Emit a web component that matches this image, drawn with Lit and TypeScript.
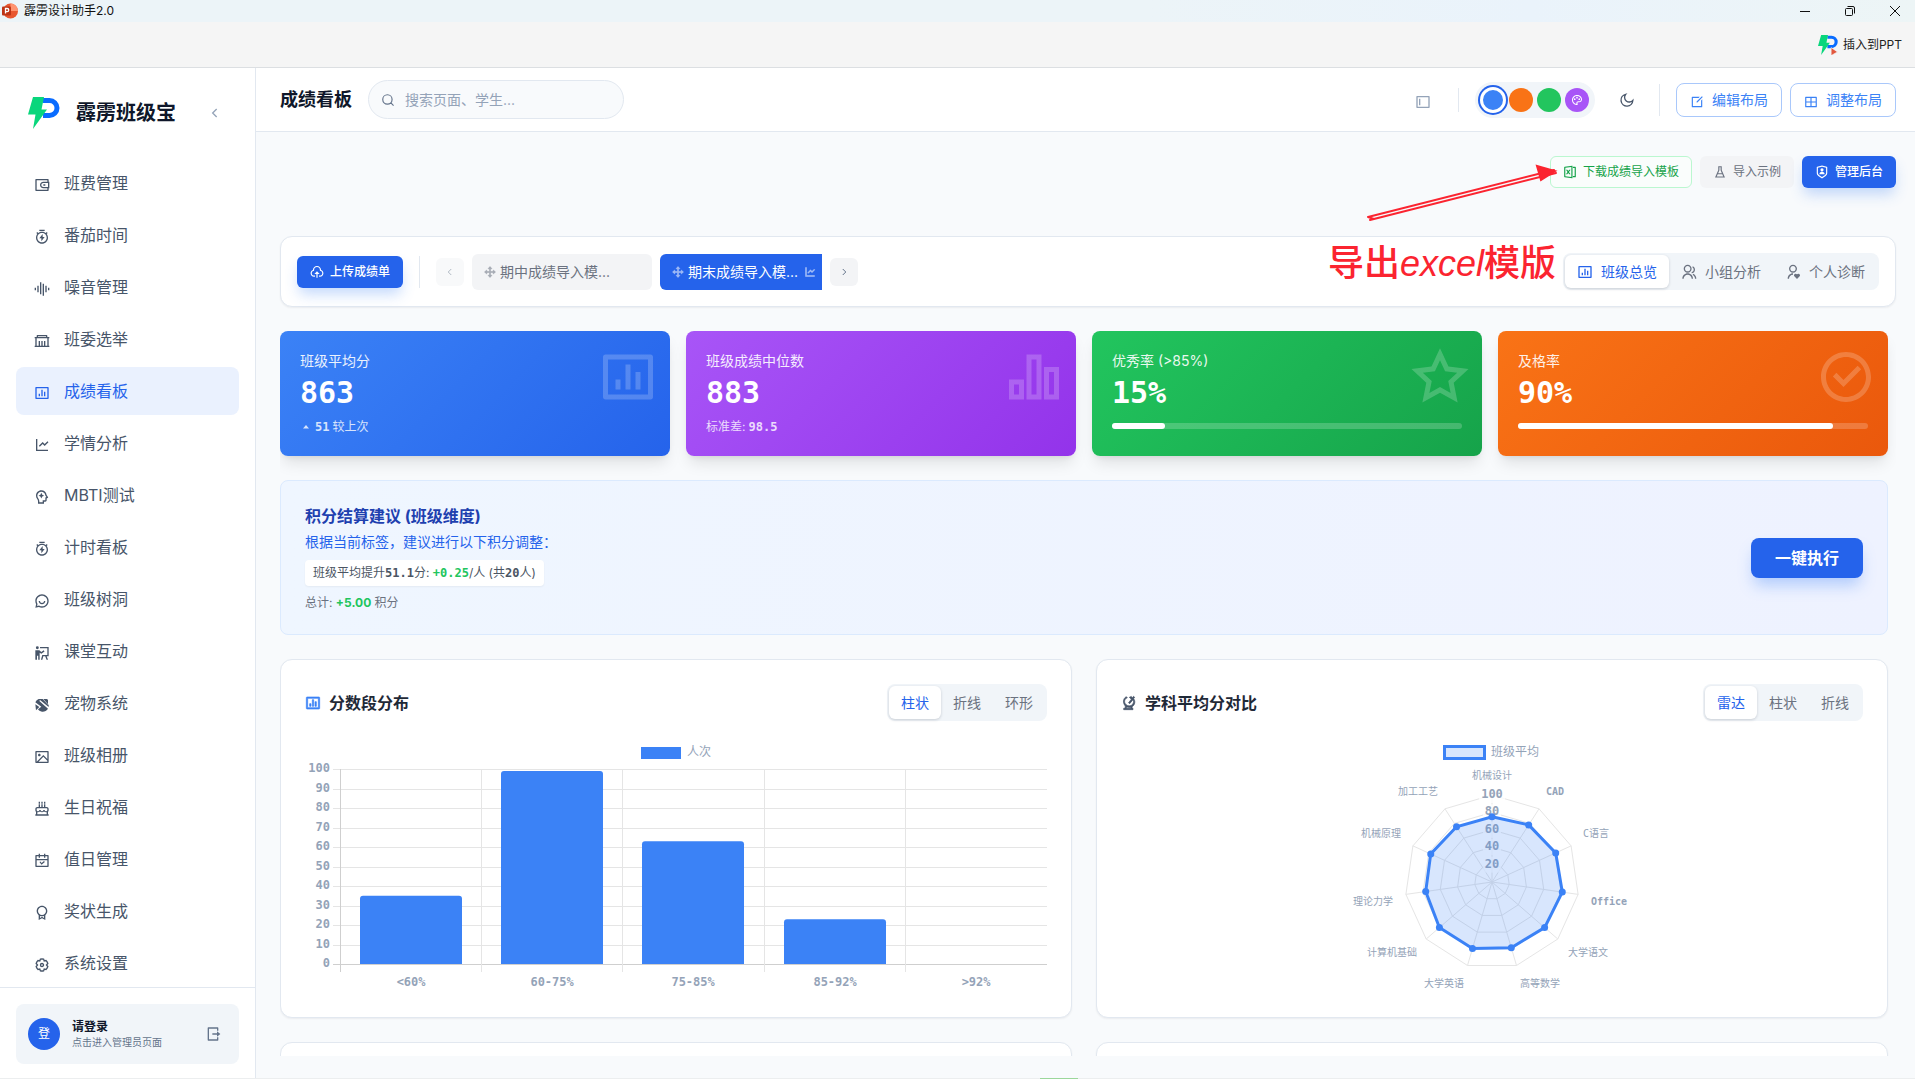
import { LitElement, html, svg, css, nothing } from "lit";
import { customElement, property } from "lit/decorators.js";
import { classMap } from "lit/directives/class-map.js";

/* Icon glyphs on a 24 x 24 grid. A leading "~" marks a stroked outline. */
const ICONS: Record<string, string> = {
  wallet:
    "M22 7H23V17H22V20C22 20.6 21.6 21 21 21H3C2.4 21 2 20.6 2 20V4C2 3.4 2.4 3 3 3H21C21.6 3 22 3.4 22 4V7ZM20 17H14C11.2 17 9 14.8 9 12C9 9.2 11.2 7 14 7H20V5H4V19H20V17ZM21 15V9H14C12.3 9 11 10.3 11 12C11 13.7 12.3 15 14 15H21ZM14 11H17V13H14V11Z",
  timer:
    "M6.38 5.97C7.92 4.74 9.87 4 12 4C14.1 4 16.1 4.74 17.6 5.97L19.07 4.51L20.49 5.93L19.03 7.38C20.26 8.92 21 10.87 21 13C21 17.97 16.97 22 12 22C7.03 22 3 17.97 3 13C3 10.87 3.74 8.92 4.97 7.38L3.51 5.93L4.93 4.51L6.38 5.97ZM12 20C15.87 20 19 16.87 19 13C19 9.13 15.87 6 12 6C8.13 6 5 9.13 5 13C5 16.87 8.13 20 12 20ZM13 12H16L11 18.5V14H8L13 7.5V12ZM8 1H16V3H8V1Z",
  voice: "M5 7H7V17H5V7ZM1 10H3V14H1V10ZM9 2H11V20H9V2ZM13 4H15V22H13V4ZM17 7H19V17H17V7ZM21 10H23V14H21V10Z",
  government:
    "M20 6H23V8H22V19H23V21H1V19H2V8H1V6H4V4C4 3.4 4.4 3 5 3H19C19.6 3 20 3.4 20 4V6ZM20 8H4V19H7V12H9V19H11V12H13V19H15V12H17V19H20V8ZM6 5V6H18V5H6Z",
  chartBox:
    "M3 3H21C21.6 3 22 3.4 22 4V20C22 20.6 21.6 21 21 21H3C2.4 21 2 20.6 2 20V4C2 3.4 2.4 3 3 3ZM4 5V19H20V5H4ZM7 13H9V17H7V13ZM11 7H13V17H11V7ZM15 10H17V17H15V10Z",
  lineChart:
    "M5 3V19H21V21H3V3H5ZM20.3 6.3L21.7 7.7L16 13.4L13 10.4L8.7 14.7L7.3 13.3L13 7.6L16 10.6L20.3 6.3Z",
  mind:
    "M11 2C15.07 2 18.43 5.04 18.93 8.96L21.18 12.5C21.33 12.74 21.3 13.08 20.96 13.23L19 14.07V17C19 18.1 18.1 19 17 19H15V22H6V18.3C6 17.1 5.56 16 4.76 15C3.66 13.63 3 11.9 3 10C3 5.58 6.58 2 11 2ZM11 4C7.69 4 5 6.69 5 10C5 11.38 5.47 12.7 6.32 13.75C7.4 15.1 8 16.67 8 18.3V20H13V17H17V12.75L18.55 12.09L17 9.66L16.95 9.22C16.57 6.25 14.02 4 11 4ZM11 5.8L12.4 8.6L15.2 10L12.4 11.4L11 14.2L9.6 11.4L6.8 10L9.6 8.6Z",
  chat:
    "M7.29 20.82L2 22L3.18 16.7C2.43 15.3 2 13.7 2 12C2 6.48 6.48 2 12 2C17.52 2 22 6.48 22 12C22 17.52 17.52 22 12 22C10.3 22 8.69 21.57 7.29 20.82ZM7.58 18.71L8.23 19.06C9.38 19.67 10.67 20 12 20C16.42 20 20 16.42 20 12C20 7.58 16.42 4 12 4C7.58 4 4 7.58 4 12C4 13.33 4.33 14.62 4.94 15.77L5.29 16.42L4.63 19.37L7.58 18.71ZM7 12H9C9 13.66 10.34 15 12 15C13.66 15 15 13.66 15 12H17C17 14.76 14.76 17 12 17C9.24 17 7 14.76 7 12Z",
  classroom:
    "M5 2A2.2 2.2 0 1 1 5 6.4A2.2 2.2 0 0 1 5 2ZM9 3H22V17H19L21 22H18.8L16.8 17H14L12.5 22H10.4L12.4 15H20V5H9ZM2 8H8L11 10.5L14.5 8L15.8 9.6L11 13.2L8.5 11.5V22H6.3V16H4.5V22H2Z",
  pet: "M4 5L7 3H13L21 11.500V4L19 3H14L22 12V15L9 4.5L8 6L21 17.5C19 20.5 15.500 22.500 12 22C9 21.6 7 20 6 18.500L11 14.500L2 8ZM2 11L8 15L3 20Z",
  image:
    "M3 21C2.4 21 2 20.6 2 20V4C2 3.4 2.4 3 3 3H21C21.6 3 22 3.4 22 4V20C22 20.6 21.6 21 21 21H3ZM20 15V5H4V19L14 9L20 15ZM20 17.8L14 11.8L6.8 19H20V17.8ZM8 11C6.9 11 6 10.1 6 9C6 7.9 6.9 7 8 7C9.1 7 10 7.9 10 9C10 10.1 9.1 11 8 11Z",
  cake:
    "M7 1H9V4H7ZM11 1H13V4H11ZM15 1H17V4H15ZM7 5H9V9H11V5H13V9H15V5H17V9H19C20.7 9 22 10.300 22 12V14C22 15 21.600 15.800 21 16.300V20H22V22H2V20H3V16.300C2.400 15.800 2 15 2 14V12C2 10.300 3.300 9 5 9H7ZM5 11C4.400 11 4 11.400 4 12V13.500C4 16 8 16 8 13.500H10C10 16 14 16 14 13.500H16C16 16 20 16 20 13.500V12C20 11.400 19.600 11 19 11ZM5 17V20H19V17C17.500 17.200 16 16.800 15 15.800C13.300 17.400 10.700 17.400 9 15.800C8 16.800 6.500 17.200 5 17Z",
  calendar:
    "M9 1V3H15V1H17V3H21C21.6 3 22 3.4 22 4V20C22 20.6 21.6 21 21 21H3C2.4 21 2 20.6 2 20V4C2 3.4 2.4 3 3 3H7V1H9ZM20 11H4V19H20V11ZM7 5H4V9H20V5H17V7H15V5H9V7H7V5ZM8.200 13.500L9.600 12.600L11.500 15L15 12L16.300 13.400L11.300 17.800Z",
  award:
    "M17 15.25V22.600L12 20L7 22.600V15.250C5.170 13.780 4 11.530 4 9C4 4.580 7.580 1 12 1C16.420 1 20 4.580 20 9C20 11.530 18.830 13.780 17 15.250ZM9 16.420V19.470L12 17.670L15 19.470V16.420C14.070 16.800 13.060 17 12 17C10.940 17 9.930 16.800 9 16.420ZM12 15C15.310 15 18 12.310 18 9C18 5.690 15.310 3 12 3C8.690 3 6 5.690 6 9C6 12.310 8.690 15 12 15Z",
  settings:
    "~M9.500 3.300A9 9 0 0 1 14.500 3.300L15.300 5.900L18 5.300A9 9 0 0 1 20.700 9.700L18.700 12L20.700 14.300A9 9 0 0 1 18 18.700L15.300 18.100L14.500 20.700A9 9 0 0 1 9.500 20.700L8.700 18.100L6 18.700A9 9 0 0 1 3.300 14.300L5.300 12L3.300 9.700A9 9 0 0 1 6 5.300L8.700 5.900ZM12 9.700A2.300 2.300 0 1 1 12 14.300A2.300 2.300 0 0 1 12 9.700",
  logout:
    "M5 22C4.400 22 4 21.600 4 21V3C4 2.400 4.400 2 5 2H19C19.600 2 20 2.400 20 3V7H18V4H6V20H18V17H20V21C20 21.600 19.600 22 19 22H5ZM18 16V13H11V11H18V8L23 12L18 16Z",
  left: "~M14.500 6L8.500 12L14.500 18",
  right: "~M9.500 6L15.500 12L9.500 18",
  search: "~M11 3A8 8 0 1 1 11 19A8 8 0 0 1 11 3M17 17L21.500 21.500",
  panel:
    "M3 3H21C21.600 3 22 3.400 22 4V20C22 20.600 21.600 21 21 21H3C2.400 21 2 20.600 2 20V4C2 3.400 2.400 3 3 3ZM4 5V19H20V5ZM6 7H8V17H6Z",
  palette:
    "M12 2C17.520 2 22 6 22 11C22 14.100 19.500 16.600 16.400 16.600H14.400C13.500 16.600 12.800 17.300 12.800 18.200C12.800 18.700 13 19 13.200 19.300C13.500 19.600 13.600 20 13.600 20.400C13.600 21.300 12.900 22 12 22C6.480 22 2 17.520 2 12C2 6.480 6.480 2 12 2ZM10.800 18.200C10.800 16.200 12.400 14.600 14.400 14.600H16.400C18.400 14.600 20 13 20 11C20 7.100 16.400 4 12 4C7.600 4 4 7.600 4 12C4 15.900 6.800 19.200 10.600 19.900C10.700 19 10.800 18.700 10.800 18.200ZM7.500 12A1.700 1.700 0 1 1 7.500 8.600A1.700 1.700 0 0 1 7.500 12ZM16.500 12A1.700 1.700 0 1 1 16.500 8.600A1.700 1.700 0 0 1 16.500 12ZM12 9A1.700 1.700 0 1 1 12 5.600A1.700 1.700 0 0 1 12 9Z",
  moon: "~M10 3.500A6.700 6.700 0 0 0 20.800 12.500A8.900 8.900 0 1 1 10 3.500Z",
  edit:
    "M16.760 3L14.760 5H5V19H19V9.240L21 7.240V20C21 20.600 20.600 21 20 21H4C3.400 21 3 20.600 3 20V4C3 3.400 3.400 3 4 3H16.760ZM20.490 2.100L21.900 3.510L12.700 12.700H11.290V11.300Z",
  grid:
    "M3 3H21C21.600 3 22 3.400 22 4V20C22 20.600 21.600 21 21 21H3C2.400 21 2 20.600 2 20V4C2 3.400 2.400 3 3 3ZM11 5H4V11H11ZM13 5V11H20V5ZM11 13H4V19H11ZM13 13V19H20V13Z",
  excel:
    "M2.900 3.100L15.900 1.200C16.100 1.200 16.300 1.300 16.300 1.600V22.400C16.300 22.700 16.100 22.800 15.900 22.800L2.900 20.900C2.400 20.800 2 20.400 2 20V4C2 3.600 2.400 3.200 2.900 3.100ZM4 4.900V19.100L14.300 20.600V3.400ZM17 19H20V5H17V3H21C21.600 3 22 3.400 22 4V20C22 20.600 21.600 21 21 21H17ZM10.200 12L13 16H10.600L9 13.700L7.400 16H5L7.800 12L5 8H7.400L9 10.300L10.600 8H13Z",
  flask: "~M9 3H15M10 3V9L5 20.500H19L14 9V3M8 15H16",
  shield:
    "M3.800 2.800L12 1L20.200 2.800C20.700 2.900 21 3.300 21 3.800V13.800C21 15.800 20 17.700 18.300 18.800L12 23L5.700 18.800C4 17.700 3 15.800 3 13.800V3.800C3 3.300 3.300 2.900 3.800 2.800ZM5 4.600V13.800C5 15.100 5.700 16.400 6.800 17.100L12 20.600L17.200 17.100C18.300 16.400 19 15.100 19 13.800V4.600L12 3ZM12 11A2.700 2.700 0 1 1 12 5.600A2.700 2.700 0 0 1 12 11ZM7.500 16A4.500 4.500 0 0 1 16.500 16Z",
  upload:
    "M12 1.500C16 1.500 19 4.500 19 8.400C21.500 9.300 23 11.500 23 14C23 17.300 20.500 20 17 20H15.500V18H17C19.300 18 21 16.300 21 14C21 11.800 19.500 10.300 17 10V8.500C17 5.700 14.800 3.500 12 3.500C9.200 3.500 7 5.700 7 8.500V10C4.500 10.300 3 11.800 3 14C3 16.300 4.700 18 7 18H8.500V20H7C3.500 20 1 17.300 1 14C1 11.500 2.500 9.300 5 8.400C5 4.500 8 1.500 12 1.500ZM12 10.500L16.500 15.500H13V22H11V15.500H7.500Z",
  move:
    "M12 1L16 5.500H13V11H18.500V8L23 12L18.500 16V13H13V18.500H16L12 23L8 18.500H11V13H5.500V16L1 12L5.500 8V11H11V5.500H8Z",
  group:
    "M2 22C2 17.580 5.580 14 10 14C14.420 14 18 17.580 18 22H16C16 18.690 13.310 16 10 16C6.690 16 4 18.690 4 22H2ZM10 13C6.690 13 4 10.310 4 7C4 3.690 6.690 1 10 1C13.310 1 16 3.690 16 7C16 10.310 13.310 13 10 13ZM10 11C12.210 11 14 9.210 14 7C14 4.790 12.210 3 10 3C7.790 3 6 4.790 6 7C6 9.210 7.790 11 10 11ZM18.280 14.700C21.060 15.960 23 18.750 23 22H21C21 19.560 19.550 17.470 17.460 16.530L18.280 14.700ZM17.600 3.410C19.590 4.240 21 6.200 21 8.500C21 11.370 18.800 13.730 16 13.980V11.960C17.700 11.720 19 10.260 19 8.500C19 7.120 18.200 5.930 17.040 5.360L17.600 3.410Z",
  userHeart:
    "M4 22C4 17.580 7.580 14 12 14V16C8.690 16 6 18.690 6 22H4ZM12 13C8.690 13 6 10.310 6 7C6 3.690 8.690 1 12 1C15.310 1 18 3.690 18 7C18 10.310 15.310 13 12 13ZM12 11C14.210 11 16 9.210 16 7C16 4.790 14.210 3 12 3C9.790 3 8 4.790 8 7C8 9.210 9.790 11 12 11ZM18 22.500L14 18.500C12 16 15.500 12.800 18 15.500C20.500 12.800 24 16 22 18.500Z",
  bars:
    "M2 13H8V21H2V13ZM9 3H15V21H9V3ZM16 8H22V21H16V8ZM4 15V19H6V15H4ZM11 5V19H13V5H11ZM18 10V19H20V10H18Z",
  star:
    "M12 18.260L4.950 22.210L6.520 14.280L0.590 8.790L8.610 7.840L12 0.500L15.390 7.840L23.410 8.790L17.480 14.280L19.050 22.210L12 18.260ZM12 15.970L16.250 18.350L15.300 13.570L18.880 10.260L14.040 9.690L12 5.270L9.960 9.690L5.120 10.260L8.700 13.570L7.750 18.350L12 15.970Z",
  check:
    "M12 22C6.480 22 2 17.520 2 12C2 6.480 6.480 2 12 2C17.520 2 22 6.480 22 12C22 17.520 17.520 22 12 22ZM12 20C16.420 20 20 16.420 20 12C20 7.580 16.420 4 12 4C7.580 4 4 7.580 4 12C4 16.420 7.580 20 12 20ZM11 16L6.760 11.760L8.170 10.340L11 13.170L16.660 7.510L18.070 8.930L11 16Z",
  up: "M12 8L18 15H6Z",
  radar:
    "M8 2.500L9.500 4.200C5.800 5.500 4.300 9.500 6.300 12.800C8.200 16 12 17.200 15.300 15.600C18.800 13.800 19.700 10 18 7L13 13L11.300 11.700L15.500 6.300L12.500 3.500L15.500 2.200L17 4L18.800 2L20.500 3.500L19 5.500C22 9.500 21 15 16.600 17.500V20H18V22H4V20H6L6.500 16.500C2.300 12 2.800 5.200 8 2.500ZM8.500 18L8.200 20H14.500V18.300C12.500 18.800 10.300 18.700 8.500 18Z",
};

@customElement("ui-icon")
export class UiIcon extends LitElement {
  @property() name = "";
  static styles = css`
    :host { display: inline-flex; flex: none; width: 16px; height: 16px; }
    svg { width: 100%; height: 100%; display: block; }
    .fill { fill: currentColor; fill-rule: evenodd; stroke: currentColor; stroke-width: var(--icon-weight, 0); }
    .line { fill: none; stroke: currentColor; stroke-width: 2; }
  `;
  render() {
    const d = ICONS[this.name] ?? "";
    const line = d.startsWith("~");
    return html`<svg viewBox="0 0 24 24" aria-hidden="true">
      <path class=${line ? "line" : "fill"} d=${line ? d.slice(1) : d}></path>
    </svg>`;
  }
}

@customElement("brand-mark")
export class BrandMark extends LitElement {
  @property({ type: Boolean }) play = false;
  static styles = css`
    :host { display: inline-flex; flex: none; width: 32px; height: 32px; }
    svg { width: 100%; height: 100%; display: block; }
    .p { fill: none; stroke: #0a6cff; stroke-width: 5; }
    .bolt { fill: #09d67c; }
    .play { fill: #e2583e; stroke: #f5f5f5; stroke-width: 1; }
  `;
  render() {
    return html`<svg viewBox="0 0 32 32" aria-hidden="true">
      <path class="p" d="M15 3.500H21.500A7.500 7.500 0 0 1 21.500 18.500H15"></path>
      <path class="bolt" d="M5 0H16L13.500 12.500H19L5 32L7.500 17.500H0Z"></path>
      ${this.play ? svg`<path class="play" d="M21 20L31 27L21 33Z"></path>` : nothing}
    </svg>`;
  }
}

const NAV: [string, string][] = [
  ["wallet", "班费管理"],
  ["timer", "番茄时间"],
  ["voice", "噪音管理"],
  ["government", "班委选举"],
  ["chartBox", "成绩看板"],
  ["lineChart", "学情分析"],
  ["mind", "MBTI测试"],
  ["timer", "计时看板"],
  ["chat", "班级树洞"],
  ["classroom", "课堂互动"],
  ["pet", "宠物系统"],
  ["image", "班级相册"],
  ["cake", "生日祝福"],
  ["calendar", "值日管理"],
  ["award", "奖状生成"],
  ["settings", "系统设置"],
];

const BINS: [string, number][] = [
  ["<60%", 35],
  ["60-75%", 99],
  ["75-85%", 63],
  ["85-92%", 23],
  [">92%", 0],
];

type Anchor = "start" | "middle" | "end";
const SUBJECTS: { name: string; value: number; x: number; y: number; anchor: Anchor }[] = [
  { name: "机械设计", value: 75, x: 371, y: 42, anchor: "middle" },
  { name: "CAD", value: 78, x: 425, y: 58, anchor: "start" },
  { name: "C语言", value: 80.5, x: 462, y: 100, anchor: "start" },
  { name: "Office", value: 81.6, x: 470, y: 168, anchor: "start" },
  { name: "大学语文", value: 80, x: 447, y: 219, anchor: "start" },
  { name: "高等数学", value: 78.7, x: 399, y: 250, anchor: "start" },
  { name: "大学英语", value: 79.6, x: 343, y: 250, anchor: "end" },
  { name: "计算机基础", value: 80, x: 296, y: 219, anchor: "end" },
  { name: "理论力学", value: 77, x: 272, y: 168, anchor: "end" },
  { name: "机械原理", value: 77.4, x: 280, y: 100, anchor: "end" },
  { name: "加工工艺", value: 75.4, x: 317, y: 58, anchor: "end" },
];

const chartStyles = css`
  :host { display: block; }
  svg { display: block; width: 100%; height: auto; overflow: visible; }
  text { font: 400 12px "DejaVu Sans Mono", "Noto Sans CJK SC", monospace; fill: #94a3b8; }
  .tick { font-weight: 700; }
  .small { font-size: 10px; }
  .latin { font-weight: 700; }
  .grid { stroke: #e5e5e5; fill: none; }
  .axis { stroke: #cfcfcf; fill: none; }
  .bar { fill: #3b82f6; }
`;

@customElement("score-bars")
export class ScoreBars extends LitElement {
  static styles = chartStyles;
  render() {
    const left = 36, right = 742, top = 32, bottom = 227;
    const step = (right - left) / BINS.length;
    return html`<svg viewBox="0 0 742 256" role="img" aria-label="分数段分布">
      <rect class="bar" x="336" y="10" width="40" height="12"></rect>
      <text x="382" y="19">人次</text>
      ${Array.from({ length: 11 }, (_, i) => {
        const y = Math.round(bottom - ((bottom - top) * i) / 10) + 0.5;
        return svg`<line class=${i ? "grid" : "axis"} x1=${left - 8} x2=${right} y1=${y} y2=${y}></line>
          <text class="tick" x=${left - 11} y=${y + 2} text-anchor="end">${i * 10}</text>`;
      })}
      ${BINS.map(([label, value], i) => {
        const x = Math.round(left + step * i) - 0.5;
        const h = ((bottom - top) * value) / 100;
        const bx = Math.round(left + step * i + 19);
        return svg`<line class=${i ? "grid" : "axis"} x1=${x} x2=${x} y1=${top} y2=${bottom + 8}></line>
          ${value
            ? svg`<path class="bar" d="M${bx} ${bottom}V${bottom - h + 3}q0 -3 3 -3H${bx + 99}q3 0 3 3V${bottom}Z"></path>`
            : nothing}
          <text class="tick" x=${x + step / 2} y="249" text-anchor="middle">${label}</text>`;
      })}
    </svg>`;
  }
}

@customElement("subject-radar")
export class SubjectRadar extends LitElement {
  static styles = [
    chartStyles,
    css`
      .area { fill: rgba(59, 130, 246, 0.2); stroke: #3b82f6; stroke-width: 3; }
      .key { fill: #d8e6fd; stroke: #3b82f6; stroke-width: 3; }
      .dot { fill: #3b82f6; }
      .back { fill: rgba(255, 255, 255, 0.75); }
    `,
  ];
  private point(i: number, value: number) {
    const a = (i * 2 * Math.PI) / SUBJECTS.length;
    const r = value * 0.87;
    return [371 + r * Math.sin(a), 145 - r * Math.cos(a)];
  }
  private ring(values: number[]) {
    return values.map((v, i) => this.point(i, v).map((n) => n.toFixed(1)).join(",")).join(" ");
  }
  render() {
    const levels = [20, 40, 60, 80, 100];
    return html`<svg viewBox="0 0 742 256" role="img" aria-label="学科平均分对比">
      <rect class="key" x="323.5" y="9.5" width="40" height="12"></rect>
      <text x="370" y="19">班级平均</text>
      ${levels.map((l) => svg`<polygon class="grid" points=${this.ring(SUBJECTS.map(() => l))}></polygon>`)}
      ${SUBJECTS.map((_, i) => {
        const [x, y] = this.point(i, 100);
        return svg`<line class="grid" x1="371" y1="145" x2=${x} y2=${y}></line>`;
      })}
      ${levels.map(
        (l) => svg`<rect class="back" x=${l === 100 ? 358 : 362} y=${137 - l * 0.87} width=${l === 100 ? 26 : 18} height="16"></rect>
          <text class="tick" x="371" y=${148 - l * 0.87} text-anchor="middle">${l}</text>`
      )}
      <polygon class="area" points=${this.ring(SUBJECTS.map((s) => s.value))}></polygon>
      ${SUBJECTS.map((s, i) => {
        const [x, y] = this.point(i, s.value);
        return svg`<circle class="dot" cx=${x} cy=${y} r="3.500"></circle>
          <text class=${/^[A-Za-z]+$/.test(s.name) ? "small latin" : "small"} x=${s.x} y=${s.y} text-anchor=${s.anchor}>${s.name}</text>`;
      })}
    </svg>`;
  }
}

@customElement("app-root")
export class AppRoot extends LitElement {
  static styles = css`
    :host {
      display: flex; flex-direction: column; position: relative; height: 100vh; overflow: hidden;
      font: 400 14px/20px Inter, "Noto Sans CJK SC", sans-serif; color: #475569; background: #f8fafc;
    }
    * { box-sizing: border-box; }
    button, input { font: inherit; color: inherit; margin: 0; }
    button { display: inline-flex; align-items: center; justify-content: center; border: 0; padding: 0; background: none; white-space: nowrap; cursor: pointer; }
    h1, h2, h3, p { margin: 0; }
    a { color: inherit; text-decoration: none; }
    .s10 { width: 12px; height: 12px; }
    .s14 { width: 14px; height: 14px; }
    .mono { font-family: "DejaVu Sans Mono", monospace; font-weight: 700; }

    .titlebar { display: flex; align-items: center; height: 22px; flex: none; padding: 0 8px 0 2px; gap: 6px; color: #111; font-size: 12px; background: linear-gradient(90deg, #ecf4f8 60%, #eaf3fb 80%, #edf5f6); }
    .pp { width: 16px; height: 16px; }
    .wins { margin-left: auto; display: flex; gap: 21px; }
    .wins button { width: 24px; height: 20px; }
    .wins svg { width: 12px; height: 12px; fill: none; stroke: #111; }
    .toolbar { display: flex; justify-content: flex-end; align-items: center; height: 46px; flex: none; padding: 0 13px; background: #f5f5f5; border-bottom: 1px solid #dcdfe2; }
    .insert { gap: 5px; font-size: 12px; color: #222; }
    .insert brand-mark { width: 20px; height: 20px; }

    .body { display: flex; flex: 1; min-height: 0; border-bottom: 1px solid #eceeef; }
    .sidebar { width: 256px; flex: none; display: flex; flex-direction: column; background: #fff; border-right: 1px solid #e2e8f0; }
    .brand { display: flex; align-items: center; height: 91px; flex: none; padding: 0 32px 2px 28px; }
    .brand h1 { margin-left: 16px; font-size: 20px; line-height: 28px; font-weight: 700; color: #0f172a; }
    .collapse { margin-left: auto; color: #94a3b8; width: 16px; height: 24px; }
    .nav { flex: 1; min-height: 0; display: flex; flex-direction: column; gap: 4px; padding: 0 16px; }
    .nav a { display: flex; align-items: center; gap: 14px; height: 48px; flex: none; padding: 0 18px; border-radius: 8px; font-size: 16px; line-height: 24px; font-weight: 400; }
    .nav ui-icon { margin-top: 4px; }
    .nav a.on { background: #eaf1fe; color: #2563eb; }
    .foot { flex: none; padding: 16px 16px 14px; border-top: 1px solid #e2e8f0; }
    .user { display: flex; align-items: center; width: 100%; height: 60px; padding: 0 18px 0 12px; border-radius: 8px; background: #f1f5f9; text-align: left; }
    .avatar { width: 32px; height: 32px; border-radius: 50%; background: #2563eb; color: #fff; font-size: 12px; line-height: 32px; text-align: center; }
    .who { display: flex; flex-direction: column; margin-left: 12px; font-size: 10px; line-height: 14px; color: #64748b; }
    .who strong { font-size: 12px; line-height: 16px; color: #0f172a; }
    .user ui-icon { margin-left: auto; color: #64748b; }

    .main { flex: 1; min-width: 0; display: flex; flex-direction: column; }
    .header { display: flex; align-items: center; height: 64px; flex: none; padding: 0 19px 0 24px; background: #fff; border-bottom: 1px solid #e2e8f0; }
    .header h2 { font-size: 18px; line-height: 28px; font-weight: 700; color: #0f172a; }
    .search { display: flex; align-items: center; gap: 10px; width: 256px; height: 39px; margin-left: 16px; padding: 0 12px; border: 1px solid #e2e8f0; border-radius: 20px; background: #f8fafc; color: #64748b; }
    .search input { flex: 1; min-width: 0; padding: 0; border: 0; outline: 0; background: none; }
    .search ui-icon { width: 14px; height: 14px; }
    .search input::placeholder { color: #94a3b8; opacity: 1; }
    .tools { margin-left: auto; display: flex; align-items: center; }
    .panel { margin: 4px 27px 0 0; color: #94a3b8; }
    .rule { width: 1px; height: 24px; background: #e2e8f0; }
    .rule.tall { height: 32px; }
    .swatches { display: flex; gap: 4px; margin-left: 16px; padding: 6px; border-radius: 18px; background: #f1f5f9; }
    .swatches button { width: 24px; height: 24px; border-radius: 50%; color: #fff; }
    .swatches .blue { background: #3b82f6; border: 2px solid #fff; box-shadow: 0 0 0 1px #fff, 0 0 0 3px #2563eb; }
    .orange { background: #f97316; }
    .green { background: #22c55e; }
    .purple { background: #a855f7; }
    .moon { margin: 0 24px; color: #475569; }
    .layout { gap: 8px; height: 34px; margin-left: 8px; padding: 0 13px; border: 1px solid #a9c8fb; border-radius: 8px; background: #fff; color: #3b82f6; }
    .layout ui-icon { margin-top: 4px; }
    .rule + .layout { margin-left: 16px; }

    .content { flex: 1; min-height: 0; display: flex; flex-direction: column; gap: 24px; padding: 24px 19px 22px 24px; }
    .actions { display: flex; justify-content: flex-end; gap: 8px; margin-bottom: 24px; }
    .btn { gap: 6px; height: 32px; padding: 0 12px; border: 1px solid transparent; border-radius: 6px; font-size: 12px; }
    .btn.excel { border-color: #bbf7d0; color: #16a34a; background: #fafdfc; }
    .btn.plain { background: #f3f4f6; color: #6b7280; }
    .btn.solid { background: #2563eb; color: #fff; font-weight: 500; box-shadow: 0 8px 14px -2px rgba(59, 130, 246, 0.3); }
    .card { background: #fff; border: 1px solid #e2e8f0; border-radius: 12px; box-shadow: 0 1px 2px rgba(15, 23, 42, 0.06); }
    .bar { display: flex; align-items: center; padding: 16px; flex: none; }
    .bar .rule { margin: 0 16px; }
    .page { width: 28px; height: 28px; border-radius: 6px; background: #f3f4f6; color: #64748b; }
    .page ui-icon { width: 12px; height: 12px; }
    .page:disabled { opacity: 0.5; cursor: default; }
    .files { display: flex; gap: 8px; width: 350px; margin: 0 8px; overflow: hidden; }
    .files button { flex: none; width: 180px; height: 36px; gap: 4px; padding: 0 12px; justify-content: flex-start; border-radius: 6px; background: #f3f4f6; color: #6b7280; }
    .files ui-icon { width: 12px; height: 12px; opacity: 0.6; --icon-weight: 1; }
    .files button.on { background: #2563eb; color: #fff; }
    .files .tail { margin-left: 2px; }
    .seg { display: flex; margin-left: auto; padding: 2px; border-radius: 8px; background: #f1f5f9; color: #6b7280; }
    .seg button { height: 33px; min-width: 52px; gap: 8px; padding: 0 12px; border-radius: 6px; }
    .seg button.on { background: #fff; color: #2563eb; box-shadow: 0 1px 3px rgba(15, 23, 42, 0.18); }

    .scroll { flex: 1; min-height: 0; overflow: hidden; display: flex; flex-direction: column; gap: 24px; padding-right: 8px; }
    .stats { display: grid; grid-template-columns: repeat(4, 1fr); gap: 16px; flex: none; }
    .stat { position: relative; min-height: 125px; padding: 20px; border-radius: 8px; color: #fff; box-shadow: 0 10px 15px -3px rgba(0, 0, 0, 0.1), 0 4px 6px -4px rgba(0, 0, 0, 0.1); }
    .stat h3 { font-size: 14px; line-height: 20px; font-weight: 400; opacity: 0.9; }
    .stat .num { margin: 4px 0 8px; font-size: 30px; line-height: 36px; }
    .stat .note { display: flex; align-items: center; font-size: 12px; line-height: 16px; opacity: 0.8; gap: 3px; }
    .stat .ghost { position: absolute; top: 16px; right: 12px; width: 60px; height: 60px; opacity: 0.2; }
    .track { height: 6px; margin-top: 12px; border-radius: 3px; background: rgba(255, 255, 255, 0.2); }
    .track div { height: 100%; border-radius: 3px; background: #fff; }
    .g1 { background: linear-gradient(135deg, #3b82f6, #2563eb); }
    .g2 { background: linear-gradient(135deg, #a855f7, #9333ea); }
    .g3 { background: linear-gradient(135deg, #22c55e, #16a34a); }
    .g4 { background: linear-gradient(135deg, #f97316, #ea580c); }

    .advice { display: flex; align-items: center; justify-content: space-between; flex: none; height: 155px; padding: 0 24px; border: 1px solid #dbeafe; border-radius: 8px; background: linear-gradient(90deg, #eff6ff, #eef2ff); }
    .advice h3 { font-size: 16px; line-height: 24px; font-weight: 700; color: #1e40af; }
    .advice p { color: #2563eb; line-height: 28px; }
    .chip { display: inline-block; padding: 0 8px; margin: 4px 0 8px; border-radius: 4px; background: #fff; font-size: 12px; line-height: 25px; box-shadow: 0 1px 2px rgba(0, 0, 0, 0.05); color: #4b5563; }
    .sum { font-size: 12px; line-height: 18px; color: #6b7280; }
    .plus { color: #22c55e; font-weight: 700; }
    .run { width: 112px; height: 40px; border-radius: 8px; background: #2563eb; color: #fff; font-size: 16px; font-weight: 700; box-shadow: 0 10px 15px -3px rgba(59, 130, 246, 0.35); }

    .charts { display: grid; grid-template-columns: 1fr 1fr; gap: 24px; flex: none; }
    .chart { padding: 24px; min-height: 200px; }
    .chart header { display: flex; align-items: center; gap: 8px; margin-bottom: 16px; }
    .chart h3 { font-size: 16px; line-height: 24px; font-weight: 700; color: #1f2937; }
    .chart header ui-icon { --icon-weight: 1; }
    .tint { color: #3b82f6; }

    .mark { position: absolute; right: 359px; top: 238px; font: 500 36px/52px "Liberation Sans", "Noto Sans CJK SC", sans-serif; color: #fb2430; white-space: nowrap; pointer-events: none; }
    .mark em { font-style: italic; }
    .arrow { position: absolute; right: 355px; top: 160px; width: 196px; height: 64px; pointer-events: none; }
    .arrow path { fill: none; stroke: #fb2430; stroke-width: 2; stroke-linecap: round; }
    .arrow .head { fill: #fb2430; }
    .dock { position: absolute; left: 1040px; bottom: 0; width: 38px; height: 1px; background: #9bd79b; }
  `;

  private seg(items: [string, string?][], active = 0) {
    return html`<div class="seg" role="group">
      ${items.map(
        ([label, icon], i) => html`<button type="button" class=${classMap({ on: i === active })} aria-pressed=${i === active}>
          ${icon ? html`<ui-icon name=${icon}></ui-icon>` : nothing}${label}
        </button>`
      )}
    </div>`;
  }

  private progress(value: number) {
    return html`<div class="track" role="progressbar" aria-valuenow=${value}><div style="width:${value}%"></div></div>`;
  }

  render() {
    return html`
      <div class="titlebar">
        <svg class="pp" viewBox="0 0 16 16" aria-hidden="true">
          <circle cx="8.5" cy="8" r="7.5" fill="#e8562f"></circle>
          <path d="M8.5 .5A7.5 7.5 0 0 1 16 8H8.500Z" fill="#ff9471"></path>
          <rect x="0" y="3.5" width="9" height="9" rx="1" fill="#bd3415"></rect>
          <path d="M3.500 10.500V5.500H5.200A1.500 1.500 0 0 1 5.200 8.600H3.500" fill="none" stroke="#fff" stroke-width="1.300"></path>
        </svg>
        <span>霹雳设计助手2.0</span>
        <div class="wins">
          <button type="button" aria-label="最小化"><svg viewBox="0 0 12 12"><path d="M1 6.500H11"></path></svg></button>
          <button type="button" aria-label="还原"><svg viewBox="0 0 12 12"><rect x="1.500" y="3.500" width="7" height="7" rx="1"></rect><path d="M3.500 1.500H9A1.500 1.500 0 0 1 10.500 3V8.500"></path></svg></button>
          <button type="button" aria-label="关闭"><svg viewBox="0 0 12 12"><path d="M1 1L11 11M11 1L1 11"></path></svg></button>
        </div>
      </div>
      <div class="toolbar"><button type="button" class="insert"><brand-mark play></brand-mark>插入到PPT</button></div>
      <div class="body">
        <aside class="sidebar">
          <div class="brand">
            <brand-mark></brand-mark>
            <h1>霹雳班级宝</h1>
            <button type="button" class="collapse" aria-label="收起"><ui-icon name="left"></ui-icon></button>
          </div>
          <nav class="nav">
            ${NAV.map(
              ([icon, label]) => html`<a href="#" class=${classMap({ on: label === "成绩看板" })}><ui-icon name=${icon}></ui-icon>${label}</a>`
            )}
          </nav>
          <div class="foot">
            <button type="button" class="user">
              <span class="avatar">登</span>
              <span class="who"><strong>请登录</strong>点击进入管理员页面</span>
              <ui-icon name="logout"></ui-icon>
            </button>
          </div>
        </aside>
        <main class="main">
          <div class="header">
            <h2>成绩看板</h2>
            <label class="search"><ui-icon name="search"></ui-icon><input type="search" aria-label="搜索" placeholder="搜索页面、学生..." /></label>
            <div class="tools">
              <button type="button" class="panel" aria-label="侧栏"><ui-icon name="panel"></ui-icon></button>
              <div class="rule"></div>
              <div class="swatches">
                <button type="button" class="blue" aria-label="蓝色"></button>
                <button type="button" class="orange" aria-label="橙色"></button>
                <button type="button" class="green" aria-label="绿色"></button>
                <button type="button" class="purple" aria-label="自定义"><ui-icon class="s10" name="palette"></ui-icon></button>
              </div>
              <button type="button" class="moon" aria-label="深色模式"><ui-icon name="moon"></ui-icon></button>
              <div class="rule tall"></div>
              <button type="button" class="layout"><ui-icon class="s14" name="edit"></ui-icon>编辑布局</button>
              <button type="button" class="layout"><ui-icon class="s14" name="grid"></ui-icon>调整布局</button>
            </div>
          </div>
          <div class="content">
            <div class="actions">
              <button type="button" class="btn excel"><ui-icon class="s14" name="excel"></ui-icon>下载成绩导入模板</button>
              <button type="button" class="btn plain"><ui-icon class="s14" name="flask"></ui-icon>导入示例</button>
              <button type="button" class="btn solid"><ui-icon class="s14" name="shield"></ui-icon>管理后台</button>
            </div>
            <div class="card bar">
              <button type="button" class="btn solid"><ui-icon class="s14" name="upload"></ui-icon>上传成绩单</button>
              <div class="rule tall"></div>
              <button type="button" class="page" aria-label="上一个" disabled><ui-icon name="left"></ui-icon></button>
              <div class="files">
                <button type="button"><ui-icon name="move"></ui-icon>期中成绩导入模...</button>
                <button type="button" class="on"><ui-icon name="move"></ui-icon>期末成绩导入模...<ui-icon class="tail" name="lineChart"></ui-icon></button>
              </div>
              <button type="button" class="page" aria-label="下一个"><ui-icon name="right"></ui-icon></button>
              ${this.seg([["班级总览", "chartBox"], ["小组分析", "group"], ["个人诊断", "userHeart"]])}
            </div>
            <div class="scroll">
              <section class="stats">
                <article class="stat g1">
                  <h3>班级平均分</h3>
                  <div class="num mono">863</div>
                  <div class="note"><ui-icon class="s10" name="up"></ui-icon><span class="mono">51</span> 较上次</div>
                  <ui-icon class="ghost" name="chartBox"></ui-icon>
                </article>
                <article class="stat g2">
                  <h3>班级成绩中位数</h3>
                  <div class="num mono">883</div>
                  <div class="note">标准差: <span class="mono">98.5</span></div>
                  <ui-icon class="ghost" name="bars"></ui-icon>
                </article>
                <article class="stat g3">
                  <h3>优秀率 (&gt;85%)</h3>
                  <div class="num mono">15%</div>
                  ${this.progress(15)}
                  <ui-icon class="ghost" name="star"></ui-icon>
                </article>
                <article class="stat g4">
                  <h3>及格率</h3>
                  <div class="num mono">90%</div>
                  ${this.progress(90)}
                  <ui-icon class="ghost" name="check"></ui-icon>
                </article>
              </section>
              <section class="advice">
                <div>
                  <h3>积分结算建议 (班级维度)</h3>
                  <p>根据当前标签，建议进行以下积分调整：</p>
                  <div class="chip">班级平均提升<span class="mono">51.1</span>分: <span class="mono plus">+0.25</span>/人 (共<span class="mono">20</span>人)</div>
                  <div class="sum">总计: <span class="plus">+5.00</span> 积分</div>
                </div>
                <button type="button" class="run">一键执行</button>
              </section>
              <section class="charts">
                <article class="card chart">
                  <header><ui-icon class="tint" name="chartBox"></ui-icon><h3>分数段分布</h3>${this.seg([["柱状"], ["折线"], ["环形"]])}</header>
                  <score-bars></score-bars>
                </article>
                <article class="card chart">
                  <header><ui-icon name="radar"></ui-icon><h3>学科平均分对比</h3>${this.seg([["雷达"], ["柱状"], ["折线"]])}</header>
                  <subject-radar></subject-radar>
                </article>
                <article class="card chart"></article>
                <article class="card chart"></article>
              </section>
            </div>
          </div>
        </main>
      </div>
      <svg class="arrow" viewBox="0 0 196 64" aria-hidden="true">
        <path d="M4 57L190 10M6 60L192 13M4 57L10 59"></path>
        <path class="head" d="M173 6L191 11L177 20Z"></path>
      </svg>
      <div class="mark">导出<em>excel</em>模版</div>
      <div class="dock"></div>
    `;
  }
}
